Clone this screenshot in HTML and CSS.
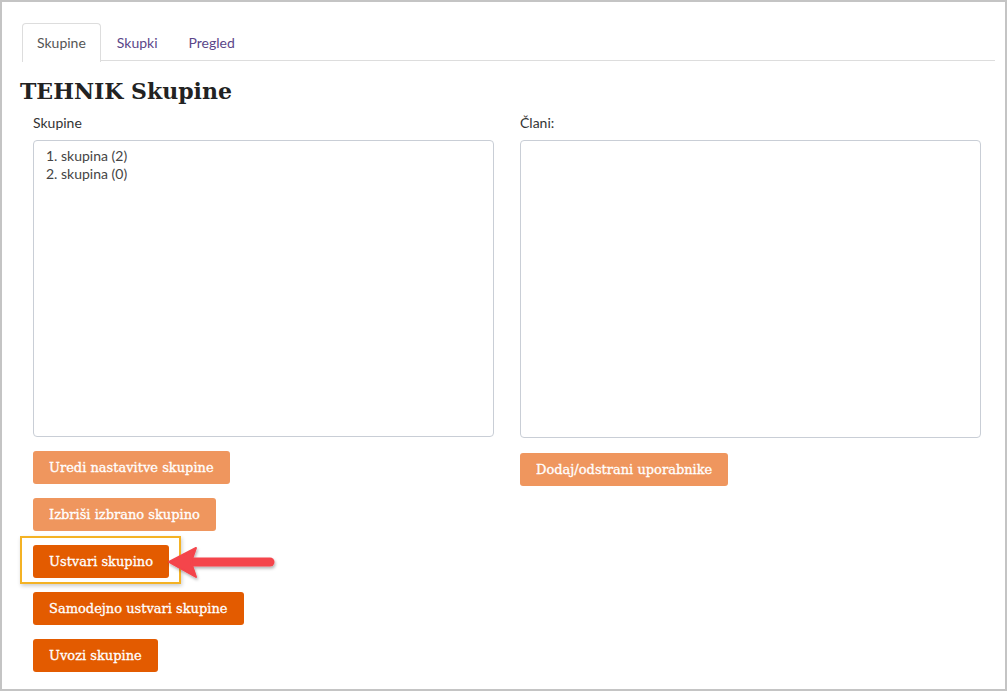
FILE: index.html
```html
<!DOCTYPE html>
<html lang="en">
<head>
    <meta charset="UTF-8">
    <title>TEHNIK Skupine</title>
    <link rel="stylesheet" href="styles.css">
</head>
<body>
    <div class="frame">

        <!-- Tabs -->
        <ul class="tabs">
            <li class="tab active">Skupine</li>
            <li class="tab">Skupki</li>
            <li class="tab">Pregled</li>
        </ul>

        <h1 class="title">TEHNIK Skupine</h1>

        <div class="columns">
            <div class="col">
                <div class="label">Skupine</div>
                <div class="listbox">
                    <div class="item">1. skupina (2)</div>
                    <div class="item">2. skupina (0)</div>
                </div>
                <div class="actions">
                    <button class="btn light">Uredi nastavitve skupine</button>
                    <button class="btn light">Izbriši izbrano skupino</button>
                    <div class="highlighted">
                        <button class="btn">Ustvari skupino</button>
                        <div class="focus-box"></div>
                        <svg class="arrow" width="112" height="40" viewBox="0 0 112 40">
                            <defs>
                                <filter id="shadow" x="-10%" y="-30%" width="130%" height="180%">
                                    <feDropShadow dx="1" dy="2" stdDeviation="1.5" flood-color="#000" flood-opacity="0.3"/>
                                </filter>
                            </defs>
                            <g filter="url(#shadow)">
                                <line x1="26" y1="18" x2="103" y2="18" stroke="#f4444b" stroke-width="9" stroke-linecap="round"/>
                                <path d="M2 18 L29 4 L24 18 L29 33 Z" fill="#f4444b" stroke="#f4444b" stroke-width="2" stroke-linejoin="round"/>
                            </g>
                        </svg>
                    </div>
                    <button class="btn">Samodejno ustvari skupine</button>
                    <button class="btn">Uvozi skupine</button>
                </div>
            </div>
            <div class="col">
                <div class="label">Člani:</div>
                <div class="listbox"></div>
                <div class="actions right">
                    <button class="btn light">Dodaj/odstrani uporabnike</button>
                </div>
            </div>
        </div>

    </div>
</body>
</html>
```

FILE: styles.css
```css
/* Page */
body {
    margin: 0;
    font-family: 'Lato', 'Open Sans', sans-serif;
    background: #c4c4c4;
}

.frame {
    width: 1003px;
    height: 687px;
    margin: 2px;
    background: #fff;
    box-sizing: border-box;
    padding: 21px 10px 0 18px;
    overflow: hidden;
}

/* Tabs */
.tabs {
    display: flex;
    list-style: none;
    margin: 0 0 0 2px;
    padding: 0;
    border-bottom: 1px solid #dddddd;
    height: 37px;
}

.tab {
    padding: 0 14px 0 15px;
    line-height: 38px;
    font-size: 14px;
    color: #5b4689;
    border: 1px solid transparent;
    border-bottom: none;
    border-radius: 4px 4px 0 0;
}

.tab.active {
    color: #555;
    background: #fff;
    border-color: #dddddd;
    padding: 0 14px;
    margin-bottom: -1px;
    height: 38px;
}

/* Heading */
.title {
    font-family: 'DejaVu Serif', serif;
    font-size: 22px;
    font-weight: bold;
    color: #222;
    margin: 14px 0 0 0;
    line-height: 32px;
}

/* Columns */
.columns {
    display: grid;
    grid-template-columns: 487px 487px;
}

.col {
    padding: 0 13px;
}

.label {
    font-size: 14px;
    color: #333;
    margin-top: 7px;
    line-height: 18px;
}

.listbox {
    margin-top: 8px;
    height: 283px;
    border: 1px solid #c9ced6;
    border-radius: 4px;
    padding: 6px 12px;
}

.col + .col .listbox {
    height: 284px;
}

.item {
    font-size: 14px;
    line-height: 18px;
    color: #444;
}

/* Buttons */
.actions {
    display: flex;
    flex-direction: column;
    align-items: flex-start;
    gap: 14px;
    margin-top: 14px;
}

.actions.right {
    margin-top: 15px;
}

.btn {
    font-family: 'DejaVu Serif', serif;
    font-size: 13px;
    color: #fff;
    -webkit-text-stroke: 0.3px #fff;
    background: #e35b00;
    border: none;
    border-radius: 3px;
    height: 33px;
    padding: 0 16px;
    cursor: pointer;
}

.btn.light {
    background: #ef965e;
}

/* Highlight overlay */
.highlighted {
    position: relative;
}

.focus-box {
    position: absolute;
    left: -13px;
    top: -9px;
    width: 161px;
    height: 48px;
    box-sizing: border-box;
    border: 2px solid #f4b224;
    box-shadow: 1px 2px 4px rgba(0, 0, 0, 0.2);
}

.arrow {
    position: absolute;
    left: 134px;
    top: -1px;
}
```
